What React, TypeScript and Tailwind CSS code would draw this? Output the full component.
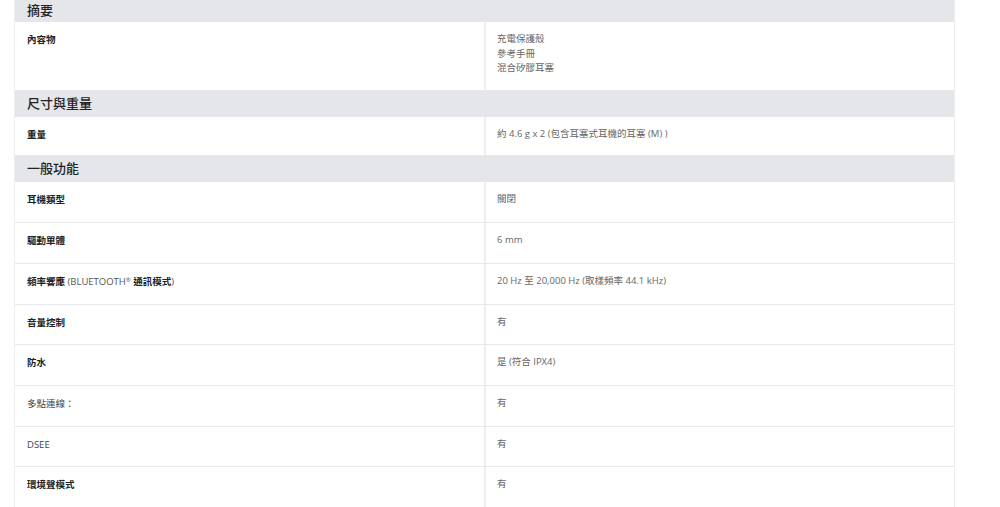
const font = { fontFamily: '"Open Sans", "Noto Sans CJK TC", "Noto Sans", sans-serif' };

type Row = { label: React.ReactNode; value: React.ReactNode; h: string; light?: boolean };

const Header = ({ title, h }: { title: string; h: string }) => (
    <div className={`flex items-center bg-[#e4e6ea] pl-[12px] text-[13px] font-medium text-[#222] ${h}`}>
        {title}
    </div>
);

const SpecRow = ({ label, value, h, light }: Row) => (
    <div className={`flex border-b border-[#e8e9ec] ${h}`}>
        <div
            className={`w-[471px] shrink-0 border-r-2 border-[#eceef0] pl-[12px] pt-[11px] text-[9.5px] leading-[14px] ${
                light ? "font-normal text-[#444]" : "font-bold text-[#222]"
            }`}
        >
            {label}
        </div>
        <div className="flex-1 pl-[11px] pt-[10px] text-[9.5px] leading-[14.5px] text-[#666]">{value}</div>
    </div>
);

const App = () => {
    return (
        <div className="h-[507px] w-[1000px] overflow-hidden bg-white" style={font}>
            <div className="ml-[14px] w-[941px] border-x border-[#eceef0]">
                <Header title="摘要" h="h-[22px]" />
                <SpecRow
                    label="內容物"
                    h="h-[69px]"
                    value={
                        <div className="flex flex-col">
                            <span>充電保護殼</span>
                            <span>參考手冊</span>
                            <span>混合矽膠耳塞</span>
                        </div>
                    }
                />
                <Header title="尺寸與重量" h="h-[26px]" />
                <SpecRow label="重量" h="h-[39px]" value="約 4.6 g x 2 (包含耳塞式耳機的耳塞 (M) )" />
                <Header title="一般功能" h="h-[26px]" />
                <SpecRow label="耳機類型" h="h-[41px]" value="關閉" />
                <SpecRow label="驅動單體" h="h-[41px]" value="6 mm" />
                <SpecRow
                    label={
                        <span>
                            頻率響應{" "}
                            <span className="font-normal text-[#555]">
                                (BLUETOOTH<sup className="text-[6px]">®</sup>
                            </span>{" "}
                            通訊模式
                            <span className="font-normal text-[#555]">)</span>
                        </span>
                    }
                    h="h-[41px]"
                    value="20 Hz 至 20,000 Hz (取樣頻率 44.1 kHz)"
                />
                <SpecRow label="音量控制" h="h-[40px]" value="有" />
                <SpecRow label="防水" h="h-[41px]" value="是 (符合 IPX4)" />
                <SpecRow label="多點連線：" h="h-[41px]" value="有" light />
                <SpecRow label="DSEE" h="h-[40px]" value="有" light />
                <SpecRow label="環境聲模式" h="h-[41px]" value="有" />
            </div>
        </div>
    );
};

export default App;
